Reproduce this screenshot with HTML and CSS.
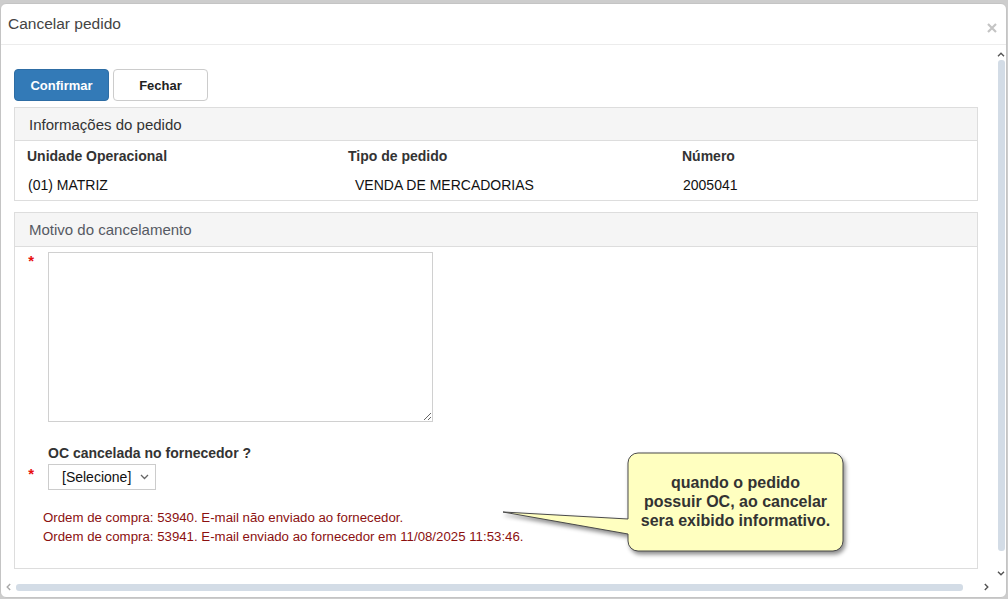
FILE: index.html
```
<!DOCTYPE html>
<html lang="pt-BR">
<head>
<meta charset="utf-8">
<title>Cancelar pedido</title>
<link rel="stylesheet" href="styles.css">
</head>
<body>
<div class="dialog">
  <div class="dlg-head">
    <span class="dlg-title">Cancelar pedido</span>
    <svg class="dlg-close" width="10" height="10" viewBox="0 0 10 10"><path d="M1 1L9 9M9 1L1 9" stroke="#c4c4c4" stroke-width="2.2" fill="none"/></svg>
  </div>
  <div class="dlg-main">
    <div class="content">
      <div class="actions">
        <button class="btn btn-primary">Confirmar</button>
        <button class="btn btn-default">Fechar</button>
      </div>

      <div class="panel">
        <div class="panel-head">Informações do pedido</div>
        <div class="info-grid">
          <div class="lbl">Unidade Operacional</div>
          <div class="lbl">Tipo de pedido</div>
          <div class="lbl">Número</div>
          <div class="val">(01) MATRIZ</div>
          <div class="val val-indent">VENDA DE MERCADORIAS</div>
          <div class="val">2005041</div>
        </div>
      </div>

      <div class="panel panel-motivo">
        <div class="panel-head head-muted">Motivo do cancelamento</div>
        <div class="form-grid">
          <div class="req">*</div>
          <textarea class="motivo"></textarea>
          <div></div>
          <div class="oc-label">OC cancelada no fornecedor ?</div>
          <div class="req req-select">*</div>
          <div class="select">
            <span>[Selecione]</span>
            <svg width="9" height="6" viewBox="0 0 9 6"><path d="M1 1L4.5 4.5L8 1" stroke="#666" stroke-width="1.3" fill="none"/></svg>
          </div>
          <div></div>
          <div class="msgs">
            <div>Ordem de compra: 53940. E-mail não enviado ao fornecedor.</div>
            <div>Ordem de compra: 53941. E-mail enviado ao fornecedor em 11/08/2025 11:53:46.</div>
          </div>
        </div>
      </div>

      <svg class="callout-shape" width="350" height="110" viewBox="0 0 350 110">
        <path d="M138 4H333A10 10 0 0 1 343 14V92A10 10 0 0 1 333 102H138A10 10 0 0 1 128 92V85L3 63L128 70V14A10 10 0 0 1 138 4Z" fill="#ffffc0" stroke="#4a4a4a" stroke-width="1"/>
      </svg>
      <div class="callout-text">quando o pedido<br>possuir OC, ao cancelar<br>sera exibido informativo.</div>
    </div>
    <div class="vscroll">
      <div class="arrow"><svg width="8" height="5" viewBox="0 0 8 5"><path d="M1 4.2L4 1.2L7 4.2" stroke="#555" stroke-width="1.4" fill="none"/></svg></div>
      <div class="vthumb"></div>
      <div class="vspace"></div>
      <div class="arrow"><svg width="8" height="5" viewBox="0 0 8 5"><path d="M1 0.8L4 3.8L7 0.8" stroke="#555" stroke-width="1.4" fill="none"/></svg></div>
    </div>
  </div>
  <div class="hscroll">
    <div class="harrow"><svg width="5" height="8" viewBox="0 0 5 8"><path d="M4.2 1L1.2 4L4.2 7" stroke="#aaa" stroke-width="1.4" fill="none"/></svg></div>
    <div class="hthumb"></div>
    <div class="harrow harrow-right"><svg width="5" height="8" viewBox="0 0 5 8"><path d="M0.8 1L3.8 4L0.8 7" stroke="#555" stroke-width="1.4" fill="none"/></svg></div>
  </div>
</div>
</body>
</html>
```
FILE: styles.css
```
* { box-sizing: border-box; }
html, body { margin: 0; padding: 0; }
body {
  background: #cdcdcd;
  padding-top: 3px;
  font-family: "Liberation Sans", Arial, sans-serif;
  width: 1008px;
  height: 599px;
  overflow: hidden;
}
.dialog {
  width: 1007px;
  height: 595px;
  background: #fff;
  border: 1px solid #c4c4c4;
  border-radius: 6px;
  display: flex;
  flex-direction: column;
  overflow: hidden;
}
.dlg-head {
  height: 41px;
  flex: none;
  border-bottom: 1px solid #ececec;
  display: flex;
  align-items: center;
  padding: 0 9px 0 7px;
}
.dlg-title {
  flex: 1;
  font-size: 15.5px;
  color: #444;
  padding-bottom: 1px;
}
.dlg-close { margin-top: 7px; margin-right: 0; }
.dlg-main {
  flex: none;
  height: 536px;
  display: flex;
}
.content {
  position: relative;
  flex: 1;
  padding: 24px 18px 0 13px;
  overflow: hidden;
}
.actions { display: flex; gap: 4px; margin-bottom: 6px; }
.btn {
  width: 95px;
  height: 32px;
  border-radius: 4px;
  font-family: "Liberation Sans", Arial, sans-serif;
  font-weight: bold;
  font-size: 13px;
  cursor: pointer;
}
.btn-primary { background: #337ab7; border: 1px solid #2e6da4; color: #fff; }
.btn-default { background: #fff; border: 1px solid #ccc; color: #222; }

.panel { border: 1px solid #ddd; }
.panel-motivo { margin-top: 11px; }
.panel-head {
  height: 33px;
  background: #f5f5f5;
  border-bottom: 1px solid #ddd;
  padding-left: 14px;
  display: flex;
  align-items: center;
  font-size: 15px;
  color: #333;
}
.head-muted { color: #555a63; height: 34px; }
.info-grid {
  display: grid;
  grid-template-columns: 321px 334px 1fr;
  row-gap: 9px;
  padding: 5px 0 5px 12px;
}
.lbl { font-size: 14px; font-weight: bold; color: #333; line-height: 20px; }
.val { font-size: 14px; color: #111; line-height: 20px; padding-left: 1px; }
.val-indent { padding-left: 7px; }

.form-grid {
  display: grid;
  grid-template-columns: 33px 1fr;
  padding: 5px 0 22px 0;
}
.req {
  color: #e81010;
  font-weight: bold;
  font-size: 15px;
  line-height: 15px;
  text-align: right;
  padding-right: 14px;
  padding-top: 1px;
}
.req-select { margin-top: 1px; }
.motivo {
  width: 385px;
  height: 170px;
  border: 1px solid #d0d0d0;
  resize: both;
  display: block;
  margin: 0;
}
.oc-label {
  font-size: 14px;
  font-weight: bold;
  color: #333;
  line-height: 18px;
  margin-top: 22px;
  margin-bottom: 2px;
}
.select {
  width: 108px;
  height: 26px;
  border: 1px solid #ccc;
  display: flex;
  align-items: center;
  justify-content: space-between;
  padding: 0 6px 0 13px;
  font-size: 14px;
  color: #111;
}
.msgs {
  margin-left: -5px;
  margin-top: 18px;
  font-size: 13.25px;
  line-height: 19px;
  color: #8b1010;
}
.callout-shape {
  position: absolute;
  left: 499px;
  top: 404px;
  filter: drop-shadow(2px 3px 2px rgba(0,0,0,0.45));
}
.callout-text {
  position: absolute;
  left: 627px;
  top: 408px;
  width: 215px;
  height: 98px;
  display: flex;
  align-items: center;
  justify-content: center;
  text-align: center;
  font-weight: bold;
  font-size: 16px;
  line-height: 19px;
  color: #333;
  padding-bottom: 2px;
}
.vscroll {
  width: 10px;
  flex: none;
  display: flex;
  flex-direction: column;
  align-items: center;
  padding: 4px 0 2px;
}
.arrow { height: 11px; display: flex; align-items: center; justify-content: center; }
.vthumb {
  width: 7px;
  height: 491px;
  background: #d3dce6;
  border-radius: 3px;
}
.vspace { flex: 1; }
.hscroll {
  flex: none;
  height: 12px;
  display: flex;
  align-items: center;
}
.harrow { width: 15px; display: flex; justify-content: center; }
.hthumb {
  width: 947px;
  height: 7px;
  background: #d3dce6;
  border-radius: 3px;
}
.harrow-right { margin-left: 16px; }
```
